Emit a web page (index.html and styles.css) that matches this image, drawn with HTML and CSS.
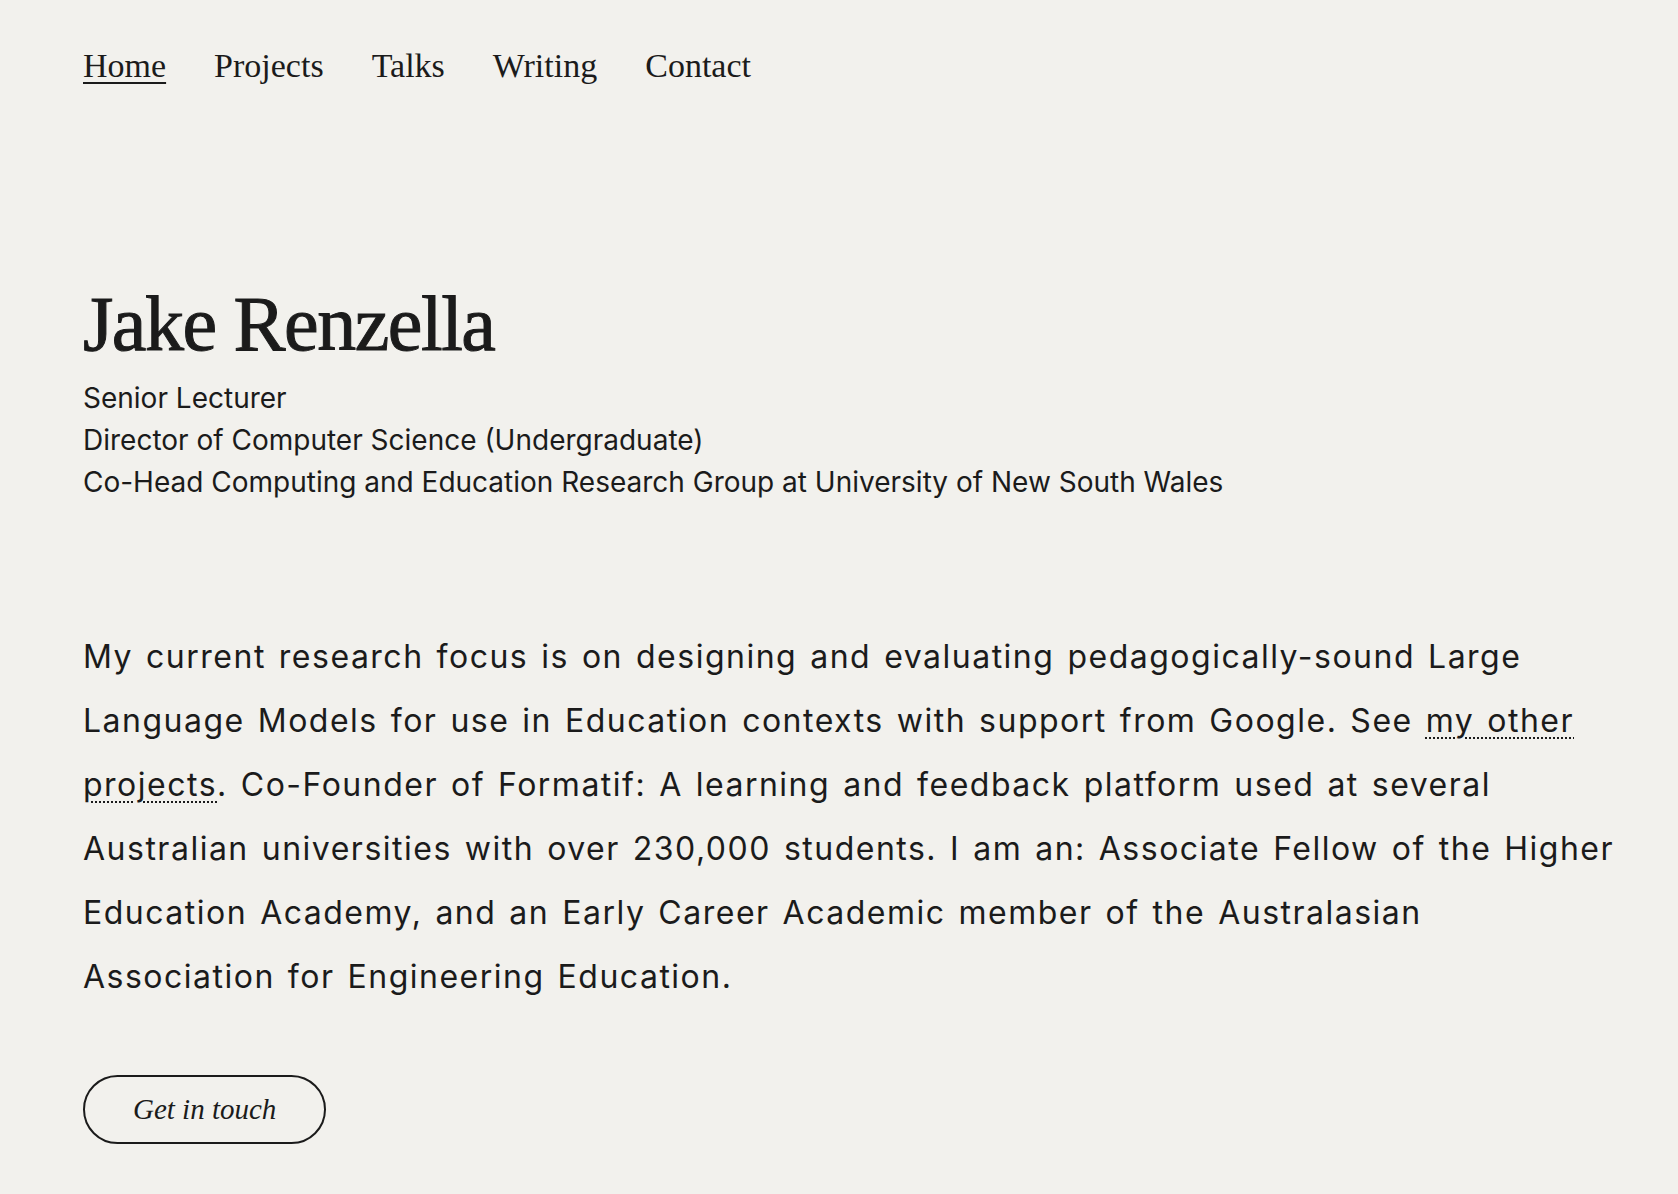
FILE: index.html
```html
<!DOCTYPE html>
<html lang="en">
<head>
<meta charset="utf-8">
<title>Jake Renzella</title>
<link rel="stylesheet" href="styles.css">
</head>
<body>
<div class="page">
  <nav class="nav">
    <a class="nav-link active" href="#">Home</a>
    <a class="nav-link" href="#">Projects</a>
    <a class="nav-link" href="#">Talks</a>
    <a class="nav-link" href="#">Writing</a>
    <a class="nav-link" href="#">Contact</a>
  </nav>
  <header class="hero">
    <h1 class="name">Jake Renzella</h1>
    <div class="roles">
      <div>Senior Lecturer</div>
      <div>Director of Computer Science (Undergraduate)</div>
      <div>Co-Head Computing and Education Research Group at University of New South Wales</div>
    </div>
  </header>
  <p class="bio">My current research focus is on designing and evaluating pedagogically-sound Large Language Models for use in Education contexts with support from Google. See <a class="dotted" href="#">my other projects</a>. Co-Founder of Formatif: A learning and feedback platform used at several Australian universities with over 230,000 students. I am an: Associate Fellow of the Higher Education Academy, and an Early Career Academic member of the Australasian Association for Engineering Education.</p>
  <a class="btn" href="#">Get in touch</a>
</div>
</body>
</html>
```

FILE: styles.css
```css
html, body {
  margin: 0;
  padding: 0;
  background: #f2f1ed;
  color: #1b1b1b;
}
.page {
  padding: 45px 0 40px 83px;
  max-width: 1538px;
}
.nav {
  display: flex;
  gap: 48px;
  font-family: "Liberation Serif", "Times New Roman", serif;
  font-size: 34px;
  line-height: 41px;
}
.nav-link {
  color: #1b1b1b;
  text-decoration: none;
}
.nav-link.active {
  text-decoration: underline;
  text-decoration-thickness: 2px;
  text-underline-offset: 5px;
}
.hero {
  margin-top: 199px;
}
.name {
  margin: 0;
  font-family: "Liberation Serif", "Times New Roman", serif;
  font-weight: 400;
  font-size: 78px;
  line-height: 78px;
  letter-spacing: -1.5px;
  -webkit-text-stroke: 1px #1b1b1b;
}
.roles {
  margin-top: 14px;
  font-family: Inter, "Liberation Sans", sans-serif;
  font-size: 28px;
  line-height: 42px;
}
.bio {
  margin: 122px 0 0;
  font-family: Inter, "Liberation Sans", sans-serif;
  font-size: 32px;
  line-height: 64px;
  letter-spacing: 1.5px;
  word-spacing: 2.5px;
}
.dotted {
  color: inherit;
  text-decoration: underline dotted;
  text-decoration-thickness: 2px;
  text-underline-offset: 5px;
}
.btn {
  display: inline-block;
  margin-top: 66px;
  padding: 16px 48px;
  border: 2px solid #1b1b1b;
  border-radius: 40px;
  font-family: "Liberation Serif", "Times New Roman", serif;
  font-style: italic;
  font-size: 29px;
  line-height: 33px;
  color: #1b1b1b;
  text-decoration: none;
}
```
